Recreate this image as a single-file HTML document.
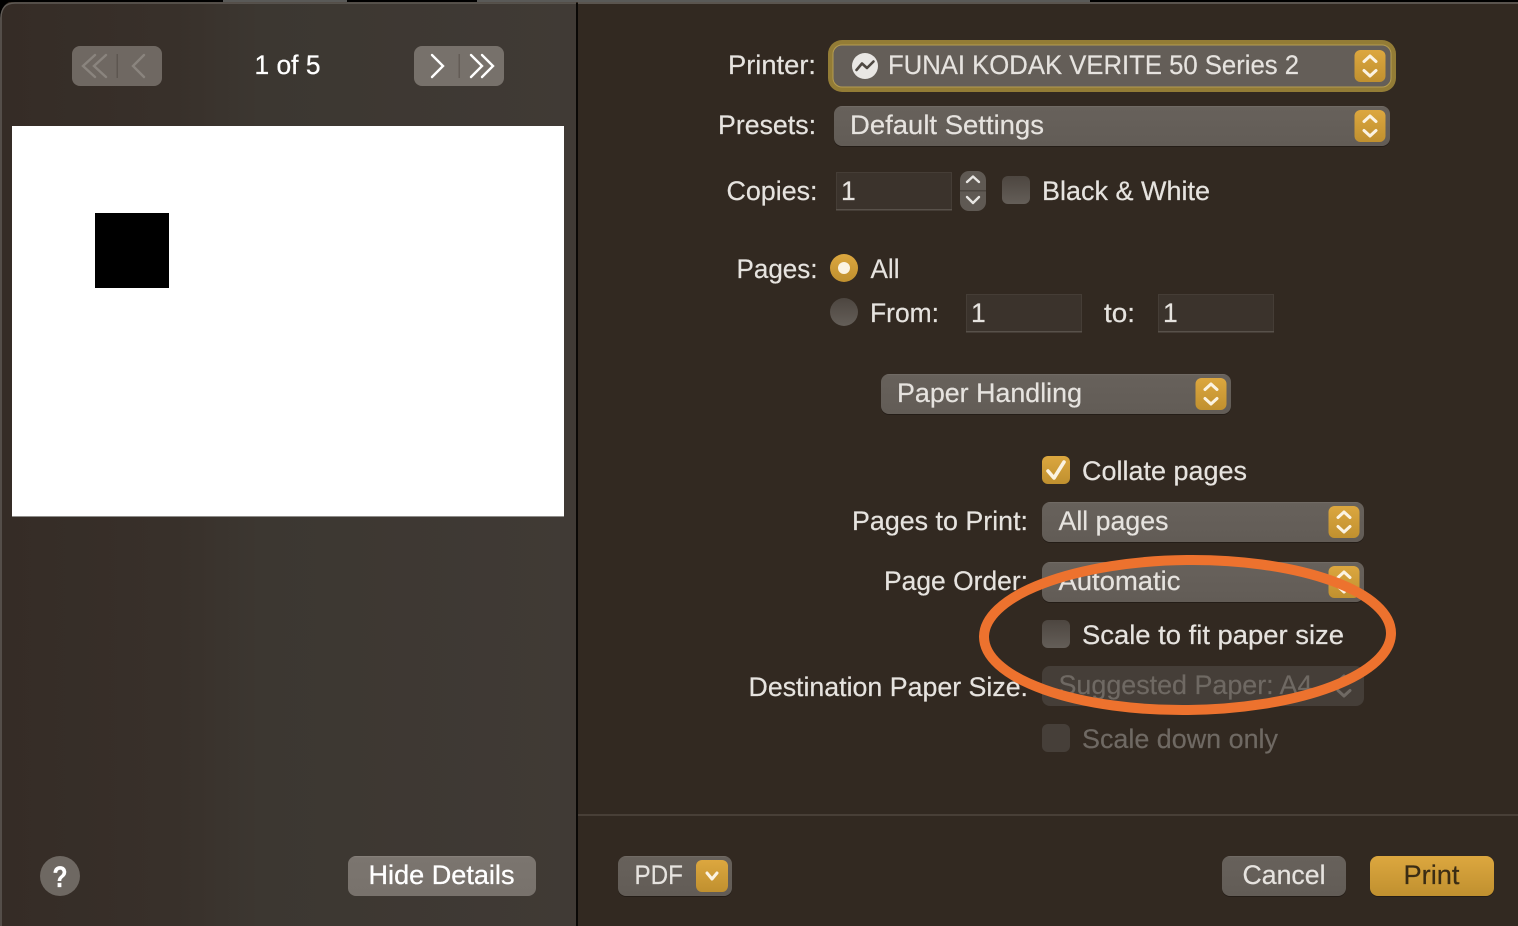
<!DOCTYPE html>
<html><head><meta charset="utf-8"><style>
html,body{margin:0;padding:0;background:#000;width:1518px;height:926px;overflow:hidden}
svg{display:block;position:absolute;left:0;top:0}
text{font-family:"Liberation Sans",sans-serif;font-size:26.5px;fill:#e6e3df;stroke:#e6e3df;stroke-width:.2}
.d{fill:#6f6963;stroke:#6f6963}
.w{fill:#fff;stroke:#fff;stroke-width:.3}
.c{fill:none;stroke:#fbf3e2;stroke-width:3;stroke-linecap:round;stroke-linejoin:round}
.p{filter:drop-shadow(0 1px 0 rgba(0,0,0,.28))}
</style></head><body>
<svg width="1518" height="926" viewBox="0 0 1518 926" xmlns="http://www.w3.org/2000/svg">
<defs>
<linearGradient id="lp" x1="0" x2="1" y1="0" y2="0"><stop offset="0" stop-color="#352c26"/><stop offset=".3" stop-color="#38302a"/><stop offset=".45" stop-color="#3c3731"/><stop offset="1" stop-color="#403a35"/></linearGradient>
<linearGradient id="g" x1="0" x2="0" y1="0" y2="1"><stop offset="0" stop-color="#dca73f"/><stop offset="1" stop-color="#c0902f"/></linearGradient>
<linearGradient id="cb" x1="0" x2="0" y1="0" y2="1"><stop offset="0" stop-color="#4d4640"/><stop offset="1" stop-color="#645e58"/></linearGradient>
<linearGradient id="pop" x1="0" x2="0" y1="0" y2="1"><stop offset="0" stop-color="#746e68"/><stop offset=".04" stop-color="#67615b"/><stop offset="1" stop-color="#625c56"/></linearGradient>
<linearGradient id="hd" x1="0" x2="0" y1="0" y2="1"><stop offset="0" stop-color="#8a847e"/><stop offset=".04" stop-color="#7b756f"/><stop offset="1" stop-color="#78726c"/></linearGradient>
</defs>
<rect width="1518" height="926" fill="#000"/>
<rect x="223" y="0" width="124" height="2" fill="#5a5a58"/>
<rect x="477" y="0" width="613" height="2" fill="#5a5a58"/>
<rect x="0" y="2" width="1518" height="924" fill="#322920"/>
<rect x="578" y="3" width="940" height="923" fill="#322921"/>
<rect x="578" y="2" width="940" height="2" fill="#5a544e"/>
<path d="M0 926V18Q0 3 15 3H576V926Z" fill="url(#lp)"/>
<path d="M1 926V18Q1 3 15 3H576" fill="none" stroke="#5f5a55" stroke-width="1.5"/>
<path d="M0 0H16Q1 2 0 18Z" fill="#000"/>
<rect x="576" y="3" width="2" height="923" fill="#0a0806"/>
<rect x="578" y="814" width="940" height="2" fill="#483f37"/>

<rect x="72" y="46" width="90" height="40" rx="8" fill="#6f6862"/>
<rect x="116.500" y="54" width="1.500" height="24" fill="#5d5650"/>
<path d="M106 55L94 66L106 77M95 55L83 66L95 77M144 55L133 66L144 77" fill="none" stroke="#8a847e" stroke-width="2.400" stroke-linecap="round"/>
<text class="w" x="254.500" y="74" textLength="66" lengthAdjust="spacingAndGlyphs">1 of 5</text>
<rect x="414" y="46" width="90" height="40" rx="8" fill="#77716b"/>
<rect x="458.500" y="54" width="1.500" height="24" fill="#635c56"/>
<path d="M432 55L443 66L432 77M471 55L482 66L471 77M482 55L493 66L482 77" fill="none" stroke="#fff" stroke-width="2.400" stroke-linecap="round"/>

<rect x="12" y="126" width="552" height="391" fill="#8f8d8a"/>
<rect x="12" y="126" width="552" height="390" fill="#fff"/>
<rect x="95" y="213" width="74" height="75" fill="#000"/>

<ellipse cx="60" cy="876" rx="20" ry="20" fill="#6e6862"/>
<text class="w" x="60" y="887" text-anchor="middle" style="font-size:30px;font-weight:700" textLength="15" lengthAdjust="spacingAndGlyphs">?</text>
<rect x="348" y="856" width="188" height="40" rx="8" fill="url(#hd)"/>
<text class="w" x="368.500" y="884" textLength="146" lengthAdjust="spacingAndGlyphs">Hide Details</text>

<rect x="828" y="40" width="568" height="52" rx="14" fill="#937c36"/>
<rect x="833" y="45" width="558" height="42" rx="9" fill="#645e58" stroke="#b59c50" stroke-width="1"/>
<circle cx="865" cy="66" r="13" fill="#e9e7e4"/>
<path d="M856.500 70L862 63.500L867 68L873.500 61.500" fill="none" stroke="#4e4842" stroke-width="2.600" stroke-linejoin="round" stroke-linecap="round"/>
<rect x="1354.500" y="50" width="31" height="32" rx="6" fill="url(#g)"/>
<path class="c" d="M1364 61.500L1370 56L1376 61.500M1364 70.500L1370 76L1376 70.500"/>
<text x="728" y="74" textLength="88" lengthAdjust="spacingAndGlyphs">Printer:</text>
<text x="888" y="74" textLength="411" lengthAdjust="spacingAndGlyphs">FUNAI KODAK VERITE 50 Series 2</text>

<rect class="p" x="834" y="106" width="556" height="40" rx="8" fill="url(#pop)"/>
<rect x="1354.500" y="110" width="31" height="32" rx="6" fill="url(#g)"/>
<path class="c" d="M1364 121.500L1370 116L1376 121.500M1364 130.500L1370 136L1376 130.500"/>
<text x="718" y="134" textLength="98" lengthAdjust="spacingAndGlyphs">Presets:</text>
<text x="850" y="134" textLength="194" lengthAdjust="spacingAndGlyphs">Default Settings</text>

<text x="726.500" y="200" textLength="91" lengthAdjust="spacingAndGlyphs">Copies:</text>
<rect x="836.500" y="172.500" width="115" height="37" fill="#3b332c" stroke="#453d36" stroke-width="1"/>
<rect x="836" y="209" width="116" height="1.500" fill="#58514a"/>
<text x="841" y="200">1</text>
<rect x="960" y="171" width="26" height="40" rx="9" fill="#5f5953"/>
<rect x="960" y="190" width="26" height="1.500" fill="#4b453f"/>
<path d="M967 182L973 176.500L979 182M967 197L973 203L979 197" fill="none" stroke="#e8e6e3" stroke-width="2.400" stroke-linecap="round" stroke-linejoin="round"/>
<rect x="1002" y="176" width="28" height="28" rx="6" fill="url(#cb)"/>
<text x="1042" y="200" textLength="168" lengthAdjust="spacingAndGlyphs">Black &amp; White</text>

<text x="736.500" y="278" textLength="81" lengthAdjust="spacingAndGlyphs">Pages:</text>
<circle cx="844" cy="268" r="14" fill="url(#g)"/>
<circle cx="844" cy="268" r="6" fill="#fbf3e2"/>
<text x="870.500" y="278" textLength="29" lengthAdjust="spacingAndGlyphs">All</text>
<circle cx="844" cy="312" r="14" fill="url(#cb)"/>
<text x="870" y="322" textLength="69" lengthAdjust="spacingAndGlyphs">From:</text>
<rect x="966.500" y="294.500" width="115" height="37" fill="#3b332c" stroke="#453d36" stroke-width="1"/>
<rect x="966" y="331" width="116" height="1.500" fill="#58514a"/>
<text x="971" y="322">1</text>
<text x="1104" y="322" textLength="31" lengthAdjust="spacingAndGlyphs">to:</text>
<rect x="1158.500" y="294.500" width="115" height="37" fill="#3b332c" stroke="#453d36" stroke-width="1"/>
<rect x="1158" y="331" width="116" height="1.500" fill="#58514a"/>
<text x="1163" y="322">1</text>

<rect class="p" x="881" y="374" width="350" height="40" rx="8" fill="url(#pop)"/>
<rect x="1195.500" y="378" width="31" height="32" rx="6" fill="url(#g)"/>
<path class="c" d="M1205 389.500L1211 384L1217 389.500M1205 398.500L1211 404L1217 398.500"/>
<text x="897" y="402" textLength="185" lengthAdjust="spacingAndGlyphs">Paper Handling</text>

<rect x="1042" y="456" width="28" height="28" rx="6" fill="url(#g)"/>
<path d="M1048 471L1054 478L1064 462" fill="none" stroke="#fbf3e2" stroke-width="3.600" stroke-linecap="round" stroke-linejoin="round"/>
<text x="1082" y="480" textLength="165" lengthAdjust="spacingAndGlyphs">Collate pages</text>

<text x="852" y="530" textLength="176" lengthAdjust="spacingAndGlyphs">Pages to Print:</text>
<rect class="p" x="1042" y="502" width="322" height="40" rx="8" fill="url(#pop)"/>
<rect x="1328.500" y="506" width="31" height="32" rx="6" fill="url(#g)"/>
<path class="c" d="M1338 517.500L1344 512L1350 517.500M1338 526.500L1344 532L1350 526.500"/>
<text x="1058.500" y="530" textLength="110" lengthAdjust="spacingAndGlyphs">All pages</text>

<text x="884" y="590" textLength="144" lengthAdjust="spacingAndGlyphs">Page Order:</text>
<rect class="p" x="1042" y="562" width="322" height="40" rx="8" fill="url(#pop)"/>
<rect x="1328.500" y="566" width="31" height="32" rx="6" fill="url(#g)"/>
<path class="c" d="M1338 577.500L1344 572L1350 577.500M1338 586.500L1344 592L1350 586.500"/>
<text x="1058.500" y="590" textLength="122" lengthAdjust="spacingAndGlyphs">Automatic</text>

<rect x="1042" y="620" width="28" height="28" rx="6" fill="url(#cb)"/>
<text x="1082" y="644" textLength="262" lengthAdjust="spacingAndGlyphs">Scale to fit paper size</text>

<text x="748.500" y="696" textLength="279.500" lengthAdjust="spacingAndGlyphs">Destination Paper Size:</text>
<rect x="1042" y="666" width="322" height="40" rx="8" fill="#453e38"/>
<path d="M1338 681.500L1344 676L1350 681.500M1338 690.500L1344 696L1350 690.500" fill="none" stroke="#6f6963" stroke-width="3" stroke-linecap="round" stroke-linejoin="round"/>
<text class="d" x="1058.500" y="694" textLength="254" lengthAdjust="spacingAndGlyphs">Suggested Paper: A4</text>

<rect x="1042" y="724" width="28" height="28" rx="6" fill="#463f39"/>
<text class="d" x="1082" y="748" textLength="196" lengthAdjust="spacingAndGlyphs">Scale down only</text>

<ellipse cx="1187.500" cy="635" rx="203.500" ry="75" fill="none" stroke="#ed722e" stroke-width="10" transform="rotate(-.6 1187.500 635)"/>

<rect class="p" x="618" y="856" width="114" height="40" rx="8" fill="url(#pop)"/>
<text x="634.500" y="884" textLength="48.500" lengthAdjust="spacingAndGlyphs">PDF</text>
<rect x="696" y="860" width="32" height="32" rx="6" fill="url(#g)"/>
<path class="c" d="M707 873L712 879L717 873"/>
<rect class="p" x="1222" y="856" width="124" height="40" rx="8" fill="url(#pop)"/>
<text x="1242.500" y="884" textLength="83" lengthAdjust="spacingAndGlyphs">Cancel</text>
<rect class="p" x="1370" y="856" width="124" height="40" rx="8" fill="url(#g)"/>
<text x="1403.500" y="884" textLength="56" lengthAdjust="spacingAndGlyphs" style="fill:#3a2c14;stroke:#3a2c14">Print</text>
</svg>
</body></html>
